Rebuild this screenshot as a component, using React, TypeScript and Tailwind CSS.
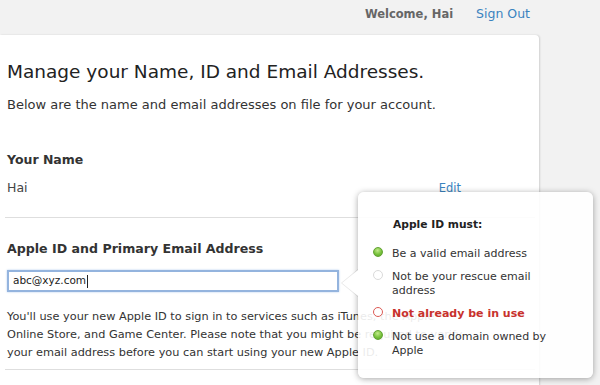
import React from "react";

const rules = [
  { text: "Be a valid email address", state: "ok" },
  { text: "Not be your rescue email address", state: "idle" },
  { text: "Not already be in use", state: "bad" },
  { text: "Not use a domain owned by Apple", state: "ok" },
];

function Dot({ state }: { state: string }) {
  if (state === "ok")
    return (
      <span className="block h-[10px] w-[10px] shrink-0 rounded-full border border-[#62a233] bg-[radial-gradient(circle_at_45%_30%,#c2ea8a,#78c23c_55%,#58a02a)]" />
    );
  if (state === "bad")
    return <span className="block h-[10px] w-[10px] shrink-0 rounded-full border-[1.5px] border-[#dc5a55] bg-white" />;
  return <span className="block h-[10px] w-[10px] shrink-0 rounded-full border border-[#dadada] bg-white" />;
}

export default function App() {
  return (
    <div
      className="relative h-[385px] w-[600px] overflow-hidden bg-[#f2f2f2] text-[#333]"
      style={{ fontFamily: '"DejaVu Sans", "Liberation Sans", sans-serif' }}
    >
      {/* Top bar */}
      <div className="flex h-[28px] items-center justify-end gap-[23px] pr-[70px] pt-[1px]">
        <span className="text-[11.5px] font-bold text-[#666]">Welcome, Hai</span>
        <span className="text-[12.5px] text-[#3a83bf]">Sign Out</span>
      </div>

      {/* Card */}
      <div className="mt-[7px] w-[539px] rounded-tr-[4px] bg-white pb-[20px] pl-[7px] pr-[4px] pt-[25px] shadow-[1px_0_2px_rgba(0,0,0,0.14)]">
        <h1 className="text-[18.5px] font-normal leading-[24px] text-[#222]">
          Manage your Name, ID and Email Addresses.
        </h1>
        <p className="mt-[12px] text-[13px] leading-[18px] text-[#333]">
          Below are the name and email addresses on file for your account.
        </p>

        <h2 className="mt-[38px] text-[12.5px] font-bold leading-[16px] text-[#333]">Your Name</h2>
        <div className="mt-[12px] flex items-center justify-between pr-[74px] leading-[16px]">
          <span className="text-[12.5px] text-[#444]">Hai</span>
          <span className="text-[11.5px] text-[#3a83bf]">Edit</span>
        </div>
        <div className="ml-[-2px] mt-[21px] h-px bg-[#dedede]" />

        <h2 className="mt-[23px] text-[12.6px] font-bold leading-[16px] text-[#333]">
          Apple ID and Primary Email Address
        </h2>
        <div className="mt-[13px] flex h-[22px] w-[332px] items-center border-2 border-[#94b4de] bg-white pl-[4px] text-[10.5px] text-[#222] shadow-[0_0_2px_#b3cdee]">
          abc@xyz.com<span className="ml-[1px] h-[13px] w-px bg-[#222]" />
        </div>
        <p className="mt-[16px] whitespace-nowrap text-[11.3px] leading-[18px] text-[#333]">
          You'll use your new Apple ID to sign in to services such as iTunes, the Apple
          <br />
          Online Store, and Game Center. Please note that you might be required to verify
          <br />
          your email address before you can start using your new Apple ID.
        </p>
        <div className="ml-[-2px] mt-[7px] h-px bg-[#dedede]" />
      </div>

      {/* Popover */}
      <div className="absolute left-[358px] top-[192px] h-[186px] w-[235px] rounded-[6px] bg-white/90 pl-[15px] pr-[10px] pt-[26px] shadow-[0_1px_6px_rgba(0,0,0,0.35)]">
        <div className="absolute left-[-17px] top-[77px] h-0 w-0 border-y-[14px] border-r-[17px] border-y-transparent border-r-[rgba(0,0,0,0.1)]" />
        <div className="absolute left-[-16px] top-[78px] h-0 w-0 border-y-[13px] border-r-[16px] border-y-transparent border-r-white" />
        <div className="pl-[20px] text-[10.7px] font-bold leading-[14px] text-[#222]">Apple ID must:</div>
        <ul className="mt-[15px] flex flex-col gap-[9px] text-[11px] leading-[14px]">
          {rules.map((r) => (
            <li key={r.text} className="flex items-start gap-[9px]">
              <Dot state={r.state} />
              <span
                className={
                  "max-w-[160px] " + (r.state === "bad" ? "font-bold text-[#c8322d]" : "text-[#333]")
                }
              >
                {r.text}
              </span>
            </li>
          ))}
        </ul>
      </div>
    </div>
  );
}
